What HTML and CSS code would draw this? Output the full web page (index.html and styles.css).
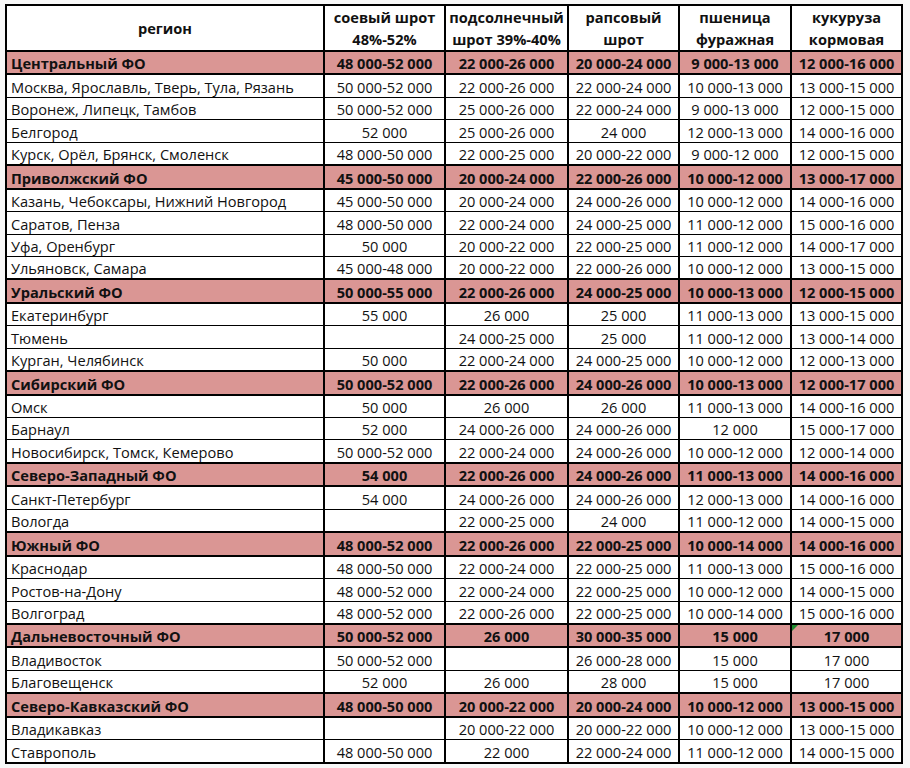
FILE: index.html
```html
<!DOCTYPE html>
<html lang="ru">
  <head>
    <meta charset="UTF-8" />
    <title>Цены на корма по регионам</title>
    <link rel="stylesheet" href="styles.css">
  </head>
  <body>
    <table class="prices">
      <colgroup>
        <col class="col-region">
        <col class="col-soy">
        <col class="col-sun">
        <col class="col-rape">
        <col class="col-wheat">
        <col class="col-corn">
      </colgroup>
      <thead>
        <tr>
          <th>регион</th>
          <th>соевый шрот<br>48%-52%</th>
          <th>подсолнечный<br>шрот 39%-40%</th>
          <th>рапсовый<br>шрот</th>
          <th>пшеница<br>фуражная</th>
          <th>кукуруза<br>кормовая</th>
        </tr>
      </thead>
      <tbody>
        <tr class="district"><td>Центральный ФО</td><td>48 000-52 000</td><td>22 000-26 000</td><td>20 000-24 000</td><td>9 000-13 000</td><td>12 000-16 000</td></tr>
        <tr><td>Москва, Ярославль, Тверь, Тула, Рязань</td><td>50 000-52 000</td><td>22 000-26 000</td><td>22 000-24 000</td><td>10 000-13 000</td><td>13 000-15 000</td></tr>
        <tr><td>Воронеж, Липецк, Тамбов</td><td>50 000-52 000</td><td>25 000-26 000</td><td>22 000-24 000</td><td>9 000-13 000</td><td>12 000-15 000</td></tr>
        <tr><td>Белгород</td><td>52 000</td><td>25 000-26 000</td><td>24 000</td><td>12 000-13 000</td><td>14 000-16 000</td></tr>
        <tr><td>Курск, Орёл, Брянск, Смоленск</td><td>48 000-50 000</td><td>22 000-25 000</td><td>20 000-22 000</td><td>9 000-12 000</td><td>12 000-15 000</td></tr>

        <tr class="district"><td>Приволжский ФО</td><td>45 000-50 000</td><td>20 000-24 000</td><td>22 000-26 000</td><td>10 000-12 000</td><td>13 000-17 000</td></tr>
        <tr><td>Казань, Чебоксары, Нижний Новгород</td><td>45 000-50 000</td><td>20 000-24 000</td><td>24 000-26 000</td><td>10 000-12 000</td><td>14 000-16 000</td></tr>
        <tr><td>Саратов, Пенза</td><td>48 000-50 000</td><td>22 000-24 000</td><td>24 000-25 000</td><td>11 000-12 000</td><td>15 000-16 000</td></tr>
        <tr><td>Уфа, Оренбург</td><td>50 000</td><td>20 000-22 000</td><td>22 000-25 000</td><td>11 000-12 000</td><td>14 000-17 000</td></tr>
        <tr><td>Ульяновск, Самара</td><td>45 000-48 000</td><td>20 000-22 000</td><td>22 000-26 000</td><td>10 000-12 000</td><td>13 000-15 000</td></tr>

        <tr class="district"><td>Уральский ФО</td><td>50 000-55 000</td><td>22 000-26 000</td><td>24 000-25 000</td><td>10 000-13 000</td><td>12 000-15 000</td></tr>
        <tr><td>Екатеринбург</td><td>55 000</td><td>26 000</td><td>25 000</td><td>11 000-13 000</td><td>13 000-15 000</td></tr>
        <tr><td>Тюмень</td><td></td><td>24 000-25 000</td><td>25 000</td><td>11 000-12 000</td><td>13 000-14 000</td></tr>
        <tr><td>Курган, Челябинск</td><td>50 000</td><td>22 000-24 000</td><td>24 000-25 000</td><td>10 000-12 000</td><td>12 000-13 000</td></tr>

        <tr class="district"><td>Сибирский ФО</td><td>50 000-52 000</td><td>22 000-26 000</td><td>24 000-26 000</td><td>10 000-13 000</td><td>12 000-17 000</td></tr>
        <tr><td>Омск</td><td>50 000</td><td>26 000</td><td>26 000</td><td>11 000-13 000</td><td>14 000-16 000</td></tr>
        <tr><td>Барнаул</td><td>52 000</td><td>24 000-26 000</td><td>24 000-26 000</td><td>12 000</td><td>15 000-17 000</td></tr>
        <tr><td>Новосибирск, Томск, Кемерово</td><td>50 000-52 000</td><td>22 000-24 000</td><td>24 000-26 000</td><td>10 000-12 000</td><td>12 000-14 000</td></tr>

        <tr class="district"><td>Северо-Западный ФО</td><td>54 000</td><td>22 000-26 000</td><td>24 000-26 000</td><td>11 000-13 000</td><td>14 000-16 000</td></tr>
        <tr><td>Санкт-Петербург</td><td>54 000</td><td>24 000-26 000</td><td>24 000-26 000</td><td>12 000-13 000</td><td>14 000-16 000</td></tr>
        <tr><td>Вологда</td><td></td><td>22 000-25 000</td><td>24 000</td><td>11 000-12 000</td><td>14 000-15 000</td></tr>

        <tr class="district"><td>Южный ФО</td><td>48 000-52 000</td><td>22 000-26 000</td><td>22 000-25 000</td><td>10 000-14 000</td><td>14 000-16 000</td></tr>
        <tr><td>Краснодар</td><td>48 000-50 000</td><td>22 000-24 000</td><td>22 000-25 000</td><td>11 000-13 000</td><td>15 000-16 000</td></tr>
        <tr><td>Ростов-на-Дону</td><td>48 000-52 000</td><td>22 000-24 000</td><td>22 000-25 000</td><td>10 000-12 000</td><td>14 000-15 000</td></tr>
        <tr><td>Волгоград</td><td>48 000-52 000</td><td>22 000-26 000</td><td>22 000-25 000</td><td>10 000-14 000</td><td>15 000-16 000</td></tr>

        <tr class="district"><td>Дальневосточный ФО</td><td>50 000-52 000</td><td>26 000</td><td>30 000-35 000</td><td>15 000</td><td class="flagged">17 000<span class="note"></span></td></tr>
        <tr><td>Владивосток</td><td>50 000-52 000</td><td></td><td>26 000-28 000</td><td>15 000</td><td>17 000</td></tr>
        <tr><td>Благовещенск</td><td>52 000</td><td>26 000</td><td>28 000</td><td>15 000</td><td>17 000</td></tr>

        <tr class="district"><td>Северо-Кавказский ФО</td><td>48 000-50 000</td><td>20 000-22 000</td><td>20 000-24 000</td><td>10 000-12 000</td><td>13 000-15 000</td></tr>
        <tr><td>Владикавказ</td><td></td><td>20 000-22 000</td><td>20 000-22 000</td><td>10 000-12 000</td><td>13 000-15 000</td></tr>
        <tr><td>Ставрополь</td><td>48 000-50 000</td><td>22 000</td><td>22 000-24 000</td><td>11 000-12 000</td><td>14 000-15 000</td></tr>
      </tbody>
    </table>
  </body>
</html>
```

FILE: styles.css
```css
/* Page */
body {
  margin: 0;
  padding: 4px 0 0 5px;
  background: #f8f8f8;
  font-family: "Open Sans", "Noto Sans", sans-serif;
  font-size: 14.6px;
  color: #111;
}

/* Table */
.prices {
  border-collapse: collapse;
  table-layout: fixed;
  width: 897px;
  background: #fff;
  border: 2px solid #000;
}

.col-region { width: 318px; }
.col-soy { width: 121px; }
.col-sun { width: 123px; }
.col-rape { width: 111px; }
.col-wheat { width: 112px; }
.col-corn { width: 111px; }

.prices th,
.prices td {
  border-left: 2px solid #000;
  border-right: 2px solid #000;
  border-top: 1px solid #000;
  border-bottom: 1px solid #000;
  padding: 0 2px;
  white-space: nowrap;
  text-align: center;
}

/* Header */
.prices th {
  height: 40px;
  line-height: 22px;
  font-weight: bold;
  vertical-align: middle;
  border-bottom: 2px solid #000;
}

/* Body rows */
.prices td {
  height: 21.45px;
  line-height: 20px;
  vertical-align: bottom;
}

.prices td:first-child {
  text-align: left;
  padding-left: 4px;
}

/* District rows */
.district td {
  background: #da9694;
  font-weight: bold;
  border-top: 2px solid #000;
  border-bottom: 2px solid #000;
}

/* Excel note marker */
.flagged {
  position: relative;
}

.note {
  position: absolute;
  top: 0;
  left: 0;
  width: 0;
  height: 0;
  border-top: 6px solid #1e8a2e;
  border-right: 6px solid transparent;
}
```
